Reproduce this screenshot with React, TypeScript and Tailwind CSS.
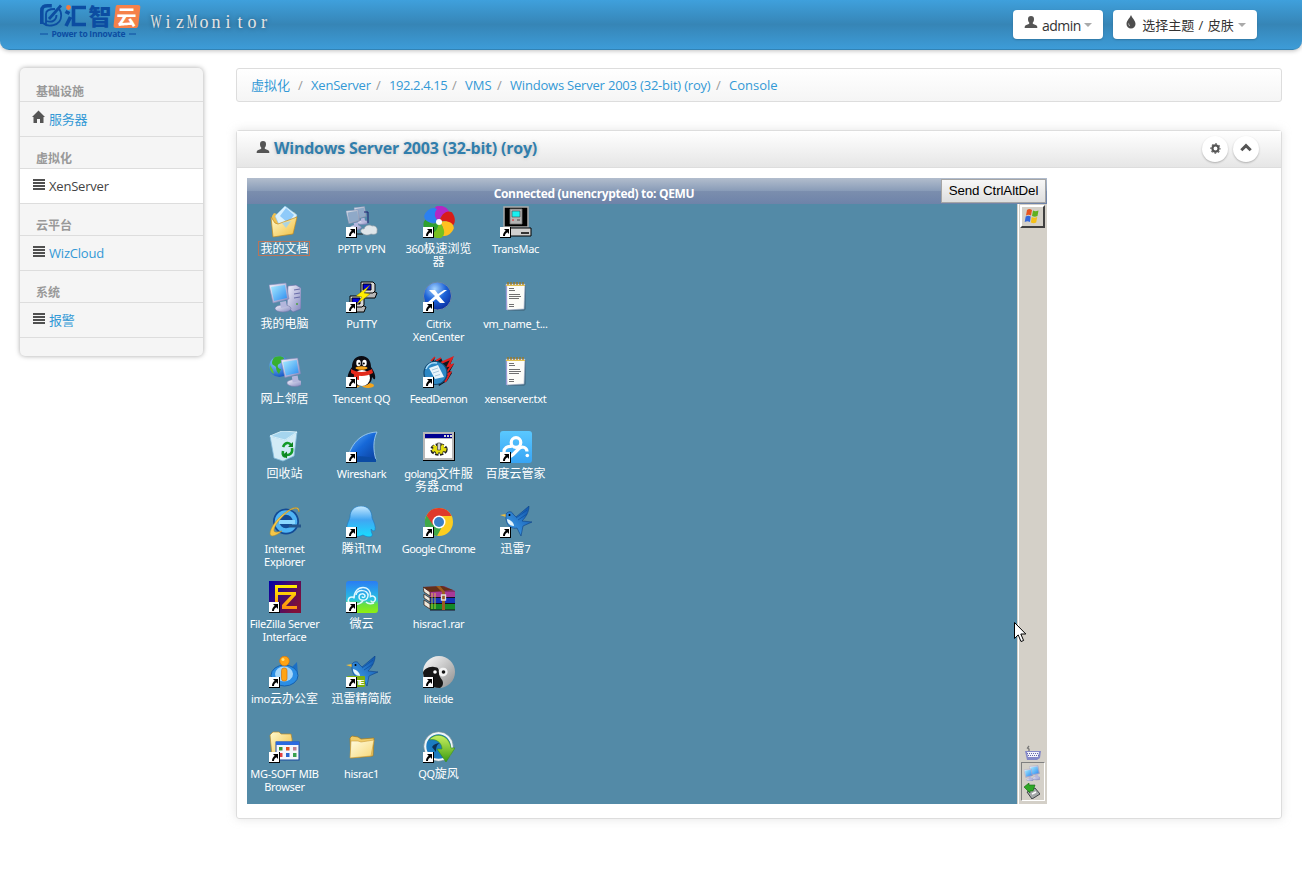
import React from "react";

type G = { className?: string };

/* ---------- small interface glyphs ---------- */
const UserGlyph = ({ className }: G) => (
  <svg viewBox="0 0 14 14" className={className} fill="#555">
    <path d="M7 1c2 0 3 1.200 3 3 0 1.700-.5 2.800-1.200 3.600v1.200c1 .8 3.600 1.200 4.200 2.200.3.500.3 1 .3 2H.7c0-1 0-1.500.3-2 .6-1 3.200-1.400 4.200-2.200V7.600C4.500 6.800 4 5.700 4 4c0-1.800 1-3 3-3z" />
  </svg>
);
const TintGlyph = ({ className }: G) => (
  <svg viewBox="0 0 14 14" className={className}>
    <path d="M7 0c1 3 4.500 5.500 4.500 9a4.500 4.600 0 0 1-9 0C2.500 5.500 6 3 7 0z" fill="#4d4d4d" />
    <path d="M5 7.500c-1 1.600-.5 3.400 1.200 3.700C5.200 10 5 9 5 7.500z" fill="#ddd" />
  </svg>
);
const HomeGlyph = ({ className }: G) => (
  <svg viewBox="0 0 14 14" className={className} fill="#555">
    <path d="M6.500 .5L13 7h-1.500v6H8V9H5v4H1.500V7H0z" />
  </svg>
);
const ListGlyph = ({ className }: G) => (
  <svg viewBox="0 0 14 14" className={className} fill="#505050" shapeRendering="crispEdges">
    <path d="M1 2h12v2H1zM1 5h12v2H1zM1 8h12v2H1zM1 11h12v2H1z" />
  </svg>
);
const CogGlyph = ({ className }: G) => (
  <svg viewBox="0 0 14 14" className={className}>
    <circle cx="7" cy="7" r="3.300" fill="none" stroke="#555" strokeWidth="2.400" />
    <circle cx="7" cy="7" r="4.900" fill="none" stroke="#555" strokeWidth="1.300" strokeDasharray="1.900 1.950" strokeDashoffset="0.950" />
  </svg>
);
const ChevronGlyph = ({ className }: G) => (
  <svg viewBox="0 0 14 14" className={className}>
    <path d="M2.300 9.300L7 4.700l4.700 4.600" fill="none" stroke="#555" strokeWidth="3" />
  </svg>
);

/* ---------- desktop drawings, 32 x 32 ---------- */
const Defs = () => (
  <svg className="absolute size-0">
    <defs>
      <linearGradient id="gold" x1="0" y1="0" x2="1" y2="1"><stop offset="0" stopColor="#fffbd0" /><stop offset="1" stopColor="#f0bd3c" /></linearGradient>
      <linearGradient id="pale" x1="0" y1="0" x2="1" y2="1"><stop offset="0" stopColor="#fffce0" /><stop offset="1" stopColor="#f8d878" /></linearGradient>
      <linearGradient id="screen" x1="0" y1="0" x2="1" y2="1"><stop offset="0" stopColor="#a8ecff" /><stop offset="1" stopColor="#2c8cf0" /></linearGradient>
      <linearGradient id="metal" x1="0" y1="0" x2="1" y2="1"><stop offset="0" stopColor="#f6f6ff" /><stop offset="1" stopColor="#8286bd" /></linearGradient>
      <linearGradient id="grey" x1="0" y1="0" x2="1" y2="1"><stop offset="0" stopColor="#e6ebf2" /><stop offset="1" stopColor="#7e8ca4" /></linearGradient>
      <radialGradient id="blueball" cx=".4" cy=".25" r=".8"><stop offset="0" stopColor="#a5d4ff" /><stop offset=".5" stopColor="#1d63d8" /><stop offset="1" stopColor="#0a2a9c" /></radialGradient>
      <radialGradient id="earth" cx=".35" cy=".3" r=".8"><stop offset="0" stopColor="#8fd0ff" /><stop offset="1" stopColor="#0a4bc0" /></radialGradient>
      <linearGradient id="fin" x1="0" y1="0" x2="1" y2="1"><stop offset="0" stopColor="#6ab8ff" /><stop offset=".5" stopColor="#1668d8" /><stop offset="1" stopColor="#0b3f9c" /></linearGradient>
      <linearGradient id="sky" x1="0" y1="0" x2="0" y2="1"><stop offset="0" stopColor="#5ac8ff" /><stop offset="1" stopColor="#38a4f4" /></linearGradient>
      <linearGradient id="tm" x1="0" y1="0" x2="0" y2="1"><stop offset="0" stopColor="#c6e9ff" /><stop offset=".45" stopColor="#41a6f2" /><stop offset="1" stopColor="#18dcff" /></linearGradient>
      <linearGradient id="fz" x1="0" y1="0" x2="1" y2=".6"><stop offset="0" stopColor="#0000a8" /><stop offset=".45" stopColor="#3a0a78" /><stop offset="1" stopColor="#801038" /></linearGradient>
      <linearGradient id="fzl" x1="0" y1="0" x2="0" y2="1"><stop offset="0" stopColor="#ffee00" /><stop offset="1" stopColor="#ff8c10" /></linearGradient>
      <linearGradient id="wy" x1="0" y1="0" x2="0" y2="1"><stop offset="0" stopColor="#2a7cf4" /><stop offset=".6" stopColor="#28c4e0" /><stop offset=".72" stopColor="#68e040" /><stop offset="1" stopColor="#90f010" /></linearGradient>
      <linearGradient id="yy" x1="0" y1="0" x2="1" y2="1"><stop offset="0" stopColor="#fff" /><stop offset="1" stopColor="#8c8c8c" /></linearGradient>
      <linearGradient id="green" x1="0" y1="0" x2="0" y2="1"><stop offset="0" stopColor="#c8f060" /><stop offset="1" stopColor="#3c9c10" /></linearGradient>
      <linearGradient id="bird" x1="0" y1="1" x2="1" y2="0"><stop offset="0" stopColor="#48a8f0" /><stop offset="1" stopColor="#0c50a8" /></linearGradient>
    </defs>
  </svg>
);

const Monitor = ({ x = 0, y = 0, s = 1, grey = false }) => (
  <g transform={`translate(${x} ${y}) scale(${s})`}>
    <ellipse cx="14" cy="26.500" rx="8" ry="3.500" fill="url(#metal)" stroke="#7478a8" strokeWidth=".6" />
    <path d="M11 20l6-1 1 6-6 1z" fill="#b4b6dc" />
    <path d="M0 3l17-2 3 16-16 4z" fill={grey ? "url(#grey)" : "url(#metal)"} stroke="#8088b8" strokeWidth=".6" />
    <path d="M2 5l14-2 2 13-13 3z" fill={grey ? "#8fa9c8" : "url(#screen)"} />
  </g>
);
const Documents = () => (
  <>
    <path d="M3 10l2-3 6 2 14-3 3 4-4 17-20 3z" fill="#f0c050" />
    <path d="M6 10L16 0l12 9-8 14-9-2z" fill="#d9f1ff" stroke="#8cc4ec" strokeWidth=".6" />
    <path d="M17 2l8 7-6 8-8-7z" fill="#7cc0f8" opacity=".8" />
    <path d="M2 11l4 6 3 1 19-7-4 17L4 31z" fill="url(#gold)" stroke="#c08a20" strokeWidth=".7" />
    <path d="M13 17l9-2-5 7z" fill="#9fd2ef" opacity=".85" />
  </>
);
const Computer = () => (
  <>
    <path d="M19 5l8-1 5 3v21l-8 3-6-5z" fill="url(#metal)" stroke="#686ca8" strokeWidth=".6" />
    <path d="M25 9l6-1M25 13l6-1M25 17l6-1" stroke="#686ca8" />
    <circle cx="28" cy="23" r="1" fill="#4fa040" />
    <Monitor y={1} />
  </>
);
const Globe = () => (
  <>
    <circle cx="10.500" cy="10.500" r="10.500" fill="url(#earth)" />
    <path d="M6 1c3-1 7-1 9 1 0 2-3 2-3 4s-2 1-3 3 1 4 3 4l-2 5c-2-2-3-4-3-7-2-2-4-2-4-4s1-5 3-6z" fill="#38b030" />
    <path d="M1 9l3 5 1 4c-3-1-5-5-4-9z" fill="#58c040" />
    <Monitor x={12} y={1} s={0.98} />
  </>
);
const Recycle = () => (
  <>
    <path d="M1 5l15 4L28 1l-3 24-11 5-9-3z" fill="#d9f1fb" stroke="#88bfe0" strokeWidth=".8" opacity=".95" />
    <path d="M1 5L13 0l15 1-12 8z" fill="#a5d5ee" stroke="#e9faff" strokeWidth=".8" />
    <path d="M14 16c2-5 6-5 8-2M23 17c1 5-2 7-5 7M14 20c-1 4 1 6 3 5" fill="none" stroke="#139a28" strokeWidth="2.600" />
    <path d="M19 16l5 0V11zM18 20.500v7l-4.500-3.500z" fill="#0e8422" />
  </>
);
const IE = () => (
  <>
    <circle cx="17" cy="15.500" r="13" fill="#134b95" />
    <circle cx="17" cy="15.500" r="9" fill="none" stroke="#4fb4f4" strokeWidth="4.500" />
    <path d="M10 14h16v4H10z" fill="#8bd7ff" />
    <path d="M20 18.500h12v3H20z" fill="#24558a" />
    <path d="M30 6C31 0 25 0 17 6 8 12 1 22 1 28c1 4 7 1 12-3-4 1-7 2-8 0C4 21 12 11 20 5c5-3 9-4 10 1z" fill="#f6c748" stroke="#b88b20" strokeWidth=".5" />
  </>
);
const FileZilla = () => (
  <>
    <rect width="32" height="32" fill="url(#fz)" />
    <path d="M6 4h22v3H9v4h18v3L17 25h11v3H13v-4l9.500-10H9v9H6z" fill="url(#fzl)" />
  </>
);
const Imo = () => (
  <>
    <path d="M22 12l6-6 1 13z" fill="#1c6fc4" />
    <ellipse cx="15.500" cy="19.500" rx="13.500" ry="10.500" fill="#2c8ee4" stroke="#1660ac" />
    <ellipse cx="15" cy="18" rx="9" ry="7.500" fill="#a4d6fa" />
    <circle cx="15.500" cy="5" r="4.800" fill="#ffa414" stroke="#d67408" strokeWidth=".7" />
    <circle cx="14" cy="3.500" r="1.500" fill="#ffe27c" />
    <rect x="12.500" y="12" width="5.500" height="13" rx="2.500" fill="#ffa414" stroke="#d67408" strokeWidth=".7" />
  </>
);
const Mib = () => (
  <>
    <path d="M1 4l3-3h6l2 2h10l1 5v14L3 25z" fill="url(#gold)" stroke="#b98a28" strokeWidth=".7" />
    <rect x="7" y="11" width="23" height="18" fill="#f4f6fc" stroke="#1c4aa0" />
    <path d="M7 10.500h23V14H7z" fill="#2a6ae0" />
    <path d="M10 16h3.500v3.500H10z" fill="#3a9a30" /><path d="M17 16h3.500v3.500H17z" fill="#e05020" /><path d="M24 16h3.500v3.500H24z" fill="#c08090" />
    <path d="M10 22h3.500v4H10z" fill="#e04040" /><path d="M17 22h3.500v4H17z" fill="#2868d0" /><path d="M24 22h3.500v4H24z" fill="#38a050" />
  </>
);
const Pptp = () => (
  <>
    <Monitor x={8} y={0} s={0.620} grey />
    <Monitor x={0} y={3} s={0.700} grey />
    <path d="M18 6h4v11" fill="none" stroke="#202070" />
    <path d="M11 28h6" stroke="#202020" />
    <path d="M16 27c-3-2 0-5 2-4 1-4 6-5 8-3 4-1 6 3 5 5 1 3-3 4-6 3-3 2-7 1-9-1z" fill="#dfe6ea" stroke="#8a98a4" strokeWidth=".7" />
  </>
);
const PuttyBox = ({ x, y }: { x: number; y: number }) => (
  <g transform={`translate(${x} ${y})`} stroke="#000" strokeWidth="1">
    <path d="M1 13l2-2h13l2 1-2 5H1z" fill="#b8b8b8" />
    <path d="M2 1h12l2 2v7l-2 2H2z" fill="#d8d8d8" />
    <path d="M4 3h8v6H4z" fill="#0000d8" />
  </g>
);
const Putty = () => (
  <>
    <PuttyBox x={13} y={0} />
    <PuttyBox x={2} y={14} />
    <path d="M24 4L10 15l6 1-6 8 14-11-6-1z" fill="#ffee00" stroke="#6a6400" strokeWidth=".4" />
  </>
);
const QQ = () => (
  <>
    <ellipse cx="8" cy="29.500" rx="6" ry="2.500" fill="#f5a51c" /><ellipse cx="22" cy="29.500" rx="6" ry="2.500" fill="#f5a51c" />
    <path d="M15.500 0C22 0 25 5 25 11c3 4 5 9 4 12-1 1-2-1-3-2 0 6-5 9-10.500 9S5 27 5 21c-1 1-2 3-3 2-1-3 1-8 4-12 0-6 3-11 9.500-11z" fill="#0b0b12" />
    <ellipse cx="16" cy="22" rx="8" ry="8" fill="#fff" />
    <ellipse cx="12.500" cy="7" rx="2.200" ry="3.200" fill="#fff" /><ellipse cx="18.500" cy="7" rx="2.200" ry="3.200" fill="#fff" />
    <circle cx="13.200" cy="7.500" r="1" /><circle cx="17.800" cy="7.500" r="1" />
    <ellipse cx="15.500" cy="12" rx="6" ry="1.700" fill="#f6a51c" />
    <path d="M5 13c6 4 15 4 21 0l1 4c-7 4-16 4-22 0z" fill="#e22a1c" /><path d="M8 17l5 1v6l-5-1z" fill="#e22a1c" />
  </>
);
const Shark = () => (
  <>
    <path d="M1 29C5 13 14 2 31 1c-4 8-4 18-1 28z" fill="url(#fin)" stroke="#a8d4f4" strokeWidth=".8" />
    <path d="M1 28c8-4 20-3 29 0v3H1z" fill="#0b4ba4" />
  </>
);
const Tm = () => (
  <path d="M15 0c7 0 11 5 11 12 2 4 4 9 3 12-1 2-3 0-4-1 0 4 2 5 1 7-3 2-7 0-9-1-4 2-9 2-11 1-2-2 0-4-1-7-2 1-3 2-4 1C0 19 3 15 4 11 4 5 8 0 15 0z" fill="url(#tm)" stroke="#1878c4" strokeWidth=".6" />
);
const Weiyun = () => (
  <>
    <rect width="32" height="32" rx="3" fill="url(#wy)" />
    <path d="M4 22c-3-1-2-6 2-6 1 0 2 .5 2 1.500 0-7 4-11 9-11s8 4 7.500 9c3-1.500 6 1 4.500 4-1 2-4 2-4 0" fill="none" stroke="#e0f8ff" strokeWidth="1.500" />
    <path d="M6 23c6 2 9-1 11-3M10 14c0-6 13-6 12 1-1 6-9 5-9 1 0-4 6-4 6-1 0 1.500-2.500 2-3 .5M20 21c2 2 5 2 8 1" fill="none" stroke="#e0f8ff" strokeWidth="1.500" />
  </>
);
const Bird = () => (
  <>
    <path d="M0 9l6-1 3 2-3 1z" fill="#f0c040" />
    <path d="M6 8c2-3 6-3 7 0l3 3L29 0c0 6-3 11-7 15l10 1-9 4-2 10-4-8c-4 1-10-1-11-9z" fill="url(#bird)" stroke="#0c4288" strokeWidth=".6" />
    <path d="M7 13c0 4 3 7 7 7 0-3-3-6-7-7z" fill="#e4f4fc" />
    <path d="M16 12L27 4M18 14l9-6" stroke="#0b4a9a" strokeWidth=".7" />
    <circle cx="9.500" cy="9" r="1" />
  </>
);
const BirdLite = () => (
  <>
    <Bird />
    <rect x="1" y="20" width="18" height="11" rx="1" fill="#7cb010" />
    <text x="10.500" y="29" fontSize="8" fontWeight="700" fontFamily="Liberation Sans" fill="#fff" textLength="8">TE</text>
  </>
);
const Folder = () => (
  <>
    <path d="M4 7l2-2 6 1 3 2 13-1-1 18L5 27z" fill="#f0cc68" stroke="#a87a18" strokeWidth=".7" />
    <path d="M5 10l7 0 3 1 13-2-3 16-21 2z" fill="url(#pale)" stroke="#c99a38" strokeWidth=".6" />
  </>
);
const petals: [string, number][] = [["#b428c4", 0], ["#d81c18", 60], ["#ffc020", 120], ["#78c020", 180], ["#30a030", 232], ["#2c80f0", 300]];
const Browser360 = () => (
  <>
    {petals.map(([c, a]) => (
      <path key={a} d="M16 16C10 10 9 3 14 0c7-1 13 3 12 8-4-1-9 1-10 8z" fill={c} transform={`rotate(${a} 16 16)`} />
    ))}
    <circle cx="16" cy="16" r="3" fill="#fff" />
  </>
);
const Citrix = () => (
  <>
    <circle cx="14.500" cy="15" r="14" fill="url(#blueball)" stroke="#6b89a4" />
    <path d="M6 9h6l3 4 6-4h3l-8 6 6 7h-5l-4-4-5 4H4l8-7z" fill="#fff" />
  </>
);
const Feed = () => (
  <>
    <path d="M7 8L12 1l-1 4 7-3 2 4 10-4-3 7 4-1-4 7 2 2-5 8-8 5z" fill="#101820" />
    <path d="M18 7l11-5-4 8 4-1-5 7M22 19l5-2-5 9" fill="none" stroke="#e02020" strokeWidth="2" />
    <path d="M8 5l4-4M13 5l5-3" stroke="#e02020" strokeWidth="1.500" />
    <circle cx="12.500" cy="17" r="11.500" fill="#2b87c4" stroke="#134870" strokeWidth="1.200" />
    <path d="M6 12l9-3 6 12-9 2z" fill="#e9f4fb" /><path d="M9 14l6-2M10 17l6-2M12 20l5-1.500" stroke="#a8c8dc" />
    <path d="M3 13c2-5 6-7 11-6" fill="none" stroke="#a9dcfa" strokeWidth="1.500" />
  </>
);
const Cmd = () => (
  <>
    <path d="M0 1h32v29H0z" fill="#000" /><path d="M0 1h31v28H0z" fill="#b8b8b8" />
    <path d="M2 3h27v4H2z" fill="#000090" />
    <path d="M21 4h2v2h-2zM24 4h2v2h-2zM27 4h2v2h-2z" fill="#d8d8d8" />
    <path d="M2 8h27v19H2z" fill="#fff" />
    <ellipse cx="16" cy="18.500" rx="6.500" ry="4" fill="#222" stroke="#222" strokeWidth="4.500" strokeDasharray="3 1.300" />
    <ellipse cx="16" cy="18" rx="6" ry="3.500" fill="#e4dc10" stroke="#e4dc10" strokeWidth="3" strokeDasharray="2.200 1.900" />
    <path d="M14.500 12h3v7h-3z" fill="#d0d0d0" stroke="#444" strokeWidth=".7" />
  </>
);
const Chrome = () => (
  <>
    <circle cx="16" cy="16" r="14" fill="#fccd20" />
    <path d="M3.500 9.500A14 14 0 0 0 14 30l6-11-9-1z" fill="#3fa848" />
    <path d="M3.500 9.500L10 19l6-9h12.500A14 14 0 0 0 3.500 9.500z" fill="#df3a2c" />
    <circle cx="16" cy="16" r="6.500" fill="#fff" /><circle cx="16" cy="16" r="5" fill="#3a80c8" />
  </>
);
const Rar = () => (
  <>
    <path d="M0 6l21-1 11 5v4l-25 2z" fill="#88306c" /><path d="M0 6l19-1 11 4-22 2z" fill="#643018" />
    <path d="M7 11h25v6H7z" fill="#a83a98" /><path d="M7 17h25v6H7z" fill="#1434b8" /><path d="M7 23h25v6H7z" fill="#128a28" />
    <path d="M0 6l7 5v4l-6-4zM1 13l6 4v4l-6-4zM1 19l6 4v5l-6-4z" fill="#eee8dc" stroke="#301408" strokeWidth=".7" />
    <path d="M7 16.500h25M7 22.500h25M7 29h25" stroke="#180c20" />
    <path d="M9 12v16M12 12v16" stroke="#e8e030" strokeWidth=".8" />
    <path d="M13 5l6 6v18h3V11l-5-6z" fill="#9c5c20" /><path d="M18.500 14h4v5h-4z" fill="none" stroke="#e0e0e0" strokeWidth="1.300" />
  </>
);
const YinYang = () => (
  <>
    <circle cx="16" cy="16" r="16" fill="url(#yy)" />
    <path d="M0 17c0-3 6-7 11-6 5 0 5 3 5 6 0 5 4 6 4 10 0 2-1 4-3 5C8 32 1 26 0 17z" fill="#161616" />
    <path d="M16 17c-1-5 3-6 6-5s4 6 0 8c-3 1-6 0-6-3z" fill="#f2f2f2" />
    <circle cx="12" cy="16" r="1.800" fill="#fff" /><circle cx="20.500" cy="16" r="1.800" fill="#111" />
  </>
);
const Whirl = () => (
  <>
    <circle cx="15.500" cy="15.500" r="13.500" fill="#1c7cc0" stroke="#f0f6f8" strokeWidth="2.600" />
    <circle cx="15.500" cy="15.500" r="14.800" fill="none" stroke="#577784" strokeWidth=".6" />
    <path d="M9 16c2-3 5-4 8-4-3 1-4 4-4 9z" fill="#0c3054" />
    <path d="M6 9C12 1 26 3 28 17h4L23 31 14 18h5c0-6-6-11-13-9z" fill="url(#green)" stroke="#358e1c" strokeWidth=".6" />
  </>
);
const TransMac = () => (
  <>
    <path d="M4 1h24v20H4z" fill="#000" stroke="#aaa" strokeWidth="1.500" />
    <path d="M10 3h12v15H10z" fill="#b4b4b4" stroke="#777" strokeWidth=".8" /><path d="M12 5h8v6h-8z" fill="#18f0f0" stroke="#444" strokeWidth=".6" />
    <path d="M12 14h2" stroke="#e02020" /><path d="M17 14h3" stroke="#444" />
    <path d="M5 22h26v8H5z" fill="#d0d0d0" stroke="#000" /><path d="M21 27h8" stroke="#000" strokeWidth="1.500" />
  </>
);
const Notepad = () => (
  <>
    <path d="M8 4h18v24l-2 2H8z" fill="#3f6478" opacity=".6" />
    <path d="M6 3h19l-1 25-17 1z" fill="#fcfcf8" stroke="#9aa4c0" strokeWidth=".6" /><path d="M6.500 4v25" stroke="#9c9cd8" strokeWidth="1.200" />
    <path d="M8 1v3M11 1v3M14 1v3M17 1v3M20 1v3M23 1v3" stroke="#a07818" strokeWidth="1.300" /><path d="M6 4.500h19" stroke="#e0c050" />
    <path d="M9 7.500h5M9 9.500h6M9 13.500h11M9 15.500h12M9 17.500h10M9 23.500h5M9 25.500h5" stroke="#707070" strokeWidth="1" />
  </>
);
const Baidu = () => (
  <>
    <rect width="32" height="32" rx="3" fill="url(#sky)" />
    <g fill="none" stroke="#fff" strokeWidth="3.200">
      <circle cx="16" cy="11.500" r="4.800" />
      <path d="M12 15.500c-5-1-8 2-8 5 0 5 6 6 9 3l6-6c3-3 8-1 8 3" />
    </g>
    <circle cx="27.300" cy="24.500" r="1.800" fill="#fff" />
  </>
);

type Item = { lines: string[]; Art: () => React.ReactElement; link?: boolean; focus?: boolean; tight?: boolean };
const items: Item[] = [
  { lines: ["我的文档"], Art: Documents, focus: true },
  { lines: ["我的电脑"], Art: Computer },
  { lines: ["网上邻居"], Art: Globe },
  { lines: ["回收站"], Art: Recycle },
  { lines: ["Internet", "Explorer"], Art: IE },
  { lines: ["FileZilla Server", "Interface"], Art: FileZilla, link: true },
  { lines: ["imo云办公室"], Art: Imo, link: true },
  { lines: ["MG-SOFT MIB", "Browser"], Art: Mib, link: true },
  { lines: ["PPTP VPN"], Art: Pptp, link: true },
  { lines: ["PuTTY"], Art: Putty, link: true },
  { lines: ["Tencent QQ"], Art: QQ, link: true },
  { lines: ["Wireshark"], Art: Shark, link: true },
  { lines: ["腾讯TM"], Art: Tm, link: true },
  { lines: ["微云"], Art: Weiyun, link: true },
  { lines: ["迅雷精简版"], Art: BirdLite, link: true },
  { lines: ["hisrac1"], Art: Folder },
  { lines: ["360极速浏览", "器"], Art: Browser360, link: true },
  { lines: ["Citrix", "XenCenter"], Art: Citrix, link: true },
  { lines: ["FeedDemon"], Art: Feed, link: true, tight: true },
  { lines: ["golang文件服", "务器.cmd"], Art: Cmd, tight: true },
  { lines: ["Google Chrome"], Art: Chrome, link: true, tight: true },
  { lines: ["hisrac1.rar"], Art: Rar },
  { lines: ["liteide"], Art: YinYang, link: true },
  { lines: ["QQ旋风"], Art: Whirl, link: true },
  { lines: ["TransMac"], Art: TransMac, link: true },
  { lines: ["vm_name_t..."], Art: Notepad },
  { lines: ["xenserver.txt"], Art: Notepad },
  { lines: ["百度云管家"], Art: Baidu, link: true },
  { lines: ["迅雷7"], Art: Bird, link: true },
];

const Label = ({ text }: { text: string }) => (
  <>
    {text.split(/([\u4e00-\u9fff]+)/).filter(Boolean).map((part, i) =>
      /[\u4e00-\u9fff]/.test(part) ? (
        <span key={i} className="text-[12px] tracking-normal">{part}</span>
      ) : (
        <span key={i}>{part}</span>
      ),
    )}
  </>
);

const DesktopIcon = ({ lines, Art, link, focus, tight }: Item) => (
  <div className="flex flex-col items-center pt-[2px]">
    <svg viewBox="0 0 32 32" className="size-8 shrink-0">
      <Art />
      {link && (
        <g>
          <rect x="0" y="21" width="11" height="11" fill="#000" />
          <rect x="0" y="21" width="10" height="10" fill="#fff" />
          <path d="M4 23h5v5L7.300 26.300C5.500 27.500 5 28.500 5 30H3c0-2.500 1-4 2.700-5.300z" fill="#000" />
        </g>
      )}
    </svg>
    <div className="relative -ml-px mt-[4px] text-center">
      {focus && (
        <span className="absolute -left-[2px] -top-px h-[15px] w-[52px] border border-solid border-[#b8745a]" />
      )}
      {lines.map((l) => (
        <div
          key={l}
          className={
            tight
              ? "h-[13px] whitespace-nowrap font-['Noto_Sans','Noto_Sans_CJK_SC',sans-serif] text-[11px] leading-[13px] tracking-[-0.6px] text-white"
              : "h-[13px] whitespace-nowrap font-['Noto_Sans','Noto_Sans_CJK_SC',sans-serif] text-[11px] leading-[13px] tracking-[-0.3px] text-white"
          }
        >
          <Label text={l} />
        </div>
      ))}
    </div>
  </div>
);

const Caret = () => <span className="-mt-px ml-1 h-0 w-0 border-x-4 border-t-4 border-x-transparent border-t-[#aaa]" />;

const Logo = () => (
  <svg viewBox="0 0 104 40" className="h-[40px] w-[104px]">
    <g fill="none" stroke="#0c4da2">
      <path d="M3.800 24V11c0-4.500 2.500-5.300 6-5.300h4" strokeWidth="3.600" />
      <path d="M5 23c4 4 18 4 18.200-7.500 0-4-1-5.500-2.700-7M8 25V14c0-3 3-5 9-5M8.500 21c6 2 10-1 10-6" strokeWidth="1.800" />
      <path d="M11 19L23 5.500" strokeWidth="2.800" />
    </g>
    <circle cx="30.500" cy="7.500" r="2.400" fill="#f47b3d" />
    <path d="M27.500 11.500l4 2M28 26l4.500-9M48 7.500H35.500v17H48" fill="none" stroke="#0c4da2" strokeWidth="3.600" />
    <text x="50.500" y="25" fontSize="23" fontWeight="900" fontFamily="Noto Sans CJK SC" fill="#0c4da2">智</text>
    <path d="M80 5h20c2 0 2.500 1 2.300 2.500l-2 18c-.3 2-1.300 2.500-3 2.500H78c-2 0-2.700-1-2.400-2.700l2-18C77.800 5.500 78.500 5 80 5z" fill="#f5814a" />
    <text x="78.500" y="24.500" fontSize="20" fontWeight="700" fontFamily="Noto Sans CJK SC" fill="#fff">云</text>
    <path d="M2 34h8M91 34H98" stroke="#0c4da2" strokeWidth="1.200" />
    <text x="13.500" y="37" fontSize="8.500" fontWeight="700" fontFamily="Open Sans" fill="#0c4da2" textLength="74">Power to Innovate</text>
  </svg>
);

const Header = () => (
  <header className="flex h-[50px] items-start rounded-b-[9px] border-b border-[#3283b5] bg-[linear-gradient(#3fa0dc,#3685b6_50%,#3d9cd8)] shadow-[0_1px_4px_rgba(0,0,0,0.25)]">
    <a className="ml-[38px] flex">
      <Logo />
      <span className="ml-[8px] flex pt-[9px] font-['Liberation_Serif','Noto_Sans_CJK_SC',serif] text-[18px] leading-[26px] text-[#e4e4e4] [text-shadow:0_0_5px_rgba(0,0,0,0.4)]">
        {"WizMonitor".split("").map((c, i) => (
          <span key={i} className={/[WM]/.test(c) ? "inline-flex w-[12px] scale-x-[0.65] justify-center" : "inline-flex w-[12px] justify-center"}>{c}</span>
        ))}
      </span>
    </a>
    <div className="ml-auto mr-[45px] mt-[10px] flex gap-[10px] text-[14px] text-[#333]">
      <button className="flex h-[29px] w-[90px] items-center rounded bg-white pl-[11px] pt-px shadow-[0_1px_2px_rgba(0,0,0,0.2)]">
        <UserGlyph className="-mt-[7px] size-[14px]" />
        <span className="ml-1 w-[38px] tracking-[-0.55px]">admin</span>
        <Caret />
      </button>
      <button className="flex h-[29px] w-[144px] items-center rounded bg-white pl-[11px] pt-px shadow-[0_1px_2px_rgba(0,0,0,0.2)]">
        <TintGlyph className="-mt-[7px] size-[14px]" />
        <span className="ml-[4px] w-[92px] whitespace-nowrap pt-px text-[13px] [word-spacing:1px]">选择主题 / 皮肤</span>
        <Caret />
      </button>
    </div>
  </header>
);

const sections = [
  { head: "基础设施", label: "服务器", Glyph: HomeGlyph },
  { head: "虚拟化", label: "XenServer", Glyph: ListGlyph, active: true },
  { head: "云平台", label: "WizCloud", Glyph: ListGlyph },
  { head: "系统", label: "报警", Glyph: ListGlyph },
];

const Sidebar = () => (
  <nav className="mt-[18px] h-[288px] w-[183px] rounded-[5px] bg-[#f5f5f5] pt-[2px] shadow-[0_0_5px_rgba(0,0,0,0.35)]">
    {sections.map(({ head, label, Glyph, active }) => (
      <React.Fragment key={head}>
        <div className="flex h-8 items-end border-b border-[#ddd] pl-[16px] text-[12px] font-bold leading-[19px] text-[#999]">{head}</div>
        <a className={active ? "flex h-[35px] items-center border-b border-[#ddd] bg-white pl-[12px] text-[13px] text-[#444]" : "flex h-[35px] items-center border-b border-[#ddd] pl-[12px] text-[13px] text-[#3399d6]"}>
          <Glyph className="-mt-[4px] size-[14px]" />
          <span className="ml-[3px] pt-[2px] tracking-[-0.2px]">{label}</span>
        </a>
      </React.Fragment>
    ))}
  </nav>
);

const Crumbs = () => (
  <ul className="flex h-[34px] items-center rounded-[3px] border border-[#ddd] bg-[linear-gradient(#fff,#f5f5f5)] pl-[14px] pt-[2px] text-[13px] text-[#3399d6]">
    <li className="w-[47px]">虚拟化</li>
    <li className="w-[13px] text-[#999]">/</li>
    <li className="w-[65px] tracking-[-0.2px]">XenServer</li>
    <li className="w-[13px] text-[#999]">/</li>
    <li className="w-[63px] tracking-[-0.4px]">192.2.4.15</li>
    <li className="w-[13px] text-[#999]">/</li>
    <li className="w-[32px]">VMS</li>
    <li className="w-[13px] text-[#999]">/</li>
    <li className="w-[206px] whitespace-nowrap tracking-[-0.2px]">Windows Server 2003 (32-bit) (roy)</li>
    <li className="w-[13px] text-[#999]">/</li>
    <li>Console</li>
  </ul>
);

const StartFlag = () => (
  <svg viewBox="0 0 16 16" className="-ml-[2px] -mt-px size-4">
    <path d="M3 2c2-1.500 3-1 5 0L7 7.500C5 6.500 4 6.500 2 7.500z" fill="#e85420" />
    <path d="M9 2.500c2 1 3 1 5.500 0l-1 5.500c-2 1-3.500 1-5.500 0z" fill="#60b020" />
    <path d="M1.700 8.500c2-1 3-1 5 0L6 14c-2-1-3-1-5.300 0z" fill="#3468dc" />
    <path d="M7.700 9c2 1 3.500 1 5.500 0l-1 5.500c-2 1-3 1-5.300 0z" fill="#f4c018" />
  </svg>
);

const Console = () => (
  <div className="relative w-[800px]">
    <div className="flex h-[26px] items-start bg-[linear-gradient(#b2bdcd,#899cb8_49%,#7b8eae_51%,#6e83a9)] pt-px">
      <div className="w-[694px] pt-[6px] text-center text-[12px] font-bold leading-[17px] tracking-[-0.32px] text-white">Connected (unencrypted) to: QEMU</div>
      <button className="h-[24px] w-[105px] whitespace-nowrap border border-[#a5a5a5] bg-[linear-gradient(#f7f7f7,#dedede)] font-['Liberation_Sans',sans-serif] text-[13.333px] leading-[22px] tracking-[-0.1px] text-black">Send CtrlAltDel</button>
    </div>
    <div className="flex h-[600px]">
      <div className="grid w-[770px] auto-cols-[76px] grid-flow-col grid-rows-[repeat(8,75px)] gap-x-px bg-[#538AA7]">
        {items.map((it) => (
          <DesktopIcon key={it.lines[0]} {...it} />
        ))}
      </div>
      <div className="flex w-[30px] flex-col items-center border-l border-[#d4d0c8] bg-[#d4d0c8] pb-[3px] shadow-[inset_1px_0_0_#fff]">
        <div className="mt-px flex h-[23px] w-[25px] items-center justify-center border-2 border-b-[#404040] border-l-white border-r-[#404040] border-t-white">
          <StartFlag />
        </div>
        <svg viewBox="0 0 16 16" className="mb-px mt-auto size-4">
          <path d="M4 6V4L2.500 3 4 1" fill="none" stroke="#777" strokeWidth="1.300" />
          <path d="M0 6h16l-1 7-3 2H2z" fill="#8488c8" /><path d="M2 7h12l-1 5H3z" fill="#f4f4fc" />
          <path d="M2 8.500h12M3 10.500h11" stroke="#6468a8" strokeDasharray="1 1" />
        </svg>
        <div className="flex h-[39px] w-[24px] flex-col items-center justify-center gap-[2px] border border-b-white border-l-[#808080] border-r-white border-t-[#808080]">
          <svg viewBox="0 0 32 32" className="-ml-px size-4 shrink-0"><Monitor x={11} y={0} s={1} /><Monitor x={0} y={7} s={0.85} /></svg>
          <svg viewBox="0 0 16 16" className="-ml-px size-4 shrink-0">
            <path d="M3 9l8-4 5 6-8 5z" fill="#a4a8a8" stroke="#404448" /><path d="M8 11l4-2" stroke="#fff" strokeWidth="1.500" />
            <path d="M0 4l5-4v2h6l-2 6H6v2z" fill="#30a828" stroke="#126810" strokeWidth=".6" />
          </svg>
        </div>
      </div>
    </div>
    <svg viewBox="0 0 13 22" className="absolute left-[766px] top-[443px] h-[22px] w-[13px]">
      <path d="M1.500 1.500v16l3.700-3.600L8 20.500l2.600-1-2.800-6.500h5z" fill="#fff" stroke="#000" />
    </svg>
  </div>
);

const round = "flex size-[26px] items-center justify-center rounded-full bg-white shadow-[0_1px_2px_rgba(0,0,0,0.25)]";

export default function App() {
  return (
    <div className="h-[869px] overflow-hidden bg-white font-['Open_Sans','Noto_Sans_CJK_SC',sans-serif]">
      <Defs />
      <Header />
      <div className="flex gap-[33px] px-5">
        <Sidebar />
        <main className="mt-[18px] min-w-0 flex-1">
          <Crumbs />
          <section className="mt-[28px] h-[689px] rounded-[3px] border border-[#ddd] shadow-[0_0_10px_rgba(189,189,189,0.4)]">
            <div className="flex h-[37px] items-center border-b border-[#ddd] bg-[linear-gradient(#fff,#e6e6e6)] pl-[19px] pr-[22px]">
              <UserGlyph className="-mt-[4px] size-[14px]" />
              <h2 className="-mt-[3px] ml-[4px] text-[16px] font-bold tracking-[-0.22px] text-[#317eac] [text-shadow:0_0_4px_rgba(0,0,0,0.2)]">Windows Server 2003 (32-bit) (roy)</h2>
              <div className="ml-auto flex gap-[5px]">
                <span className={round}><CogGlyph className="-mt-[2px] size-[13px]" /></span>
                <span className={round}><ChevronGlyph className="-mt-[2px] size-[14px]" /></span>
              </div>
            </div>
            <div className="px-[10px] pt-[10px]">
              <Console />
            </div>
          </section>
        </main>
      </div>
    </div>
  );
}
